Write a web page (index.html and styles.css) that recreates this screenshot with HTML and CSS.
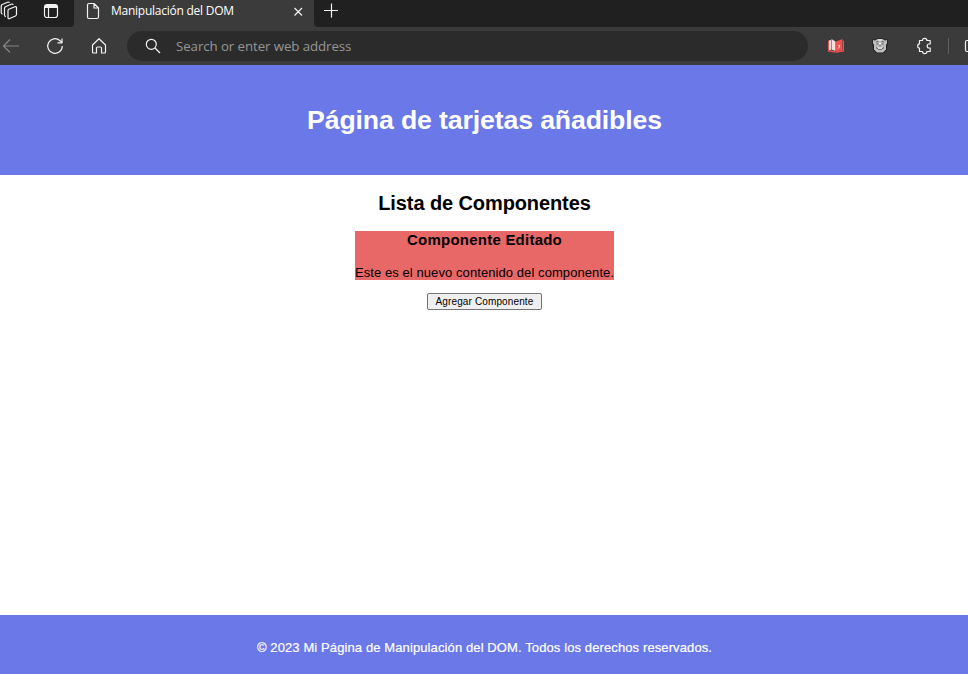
FILE: index.html
```html
<!DOCTYPE html>
<html lang="es">
<head>
<meta charset="utf-8">
<title>Manipulación del DOM</title>
<link rel="stylesheet" href="styles.css">
</head>
<body>
<div class="browser">
  <div class="tabs">
    <div class="tabs-left">
      <svg class="ico workspaces" width="18" height="20" viewBox="0 0 18 20"><path d="M8.700 8.200 15 5.700Q16.500 5.200 16.500 6.700V13.200Q16.500 14.400 15.400 15L9.700 17.500Q8 18.200 8 16.500V9.500Q8 8.500 8.700 8.200ZM6 15.500Q4.500 15.500 4.500 14V7.300Q4.500 6.200 5.500 5.700L11 3.200Q12.800 2.500 13.200 4M2.700 13Q1.200 13 1.200 11.500V5Q1.200 4 2.200 3.500L7.500 1.200Q9 .6 9.500 1.800"/></svg>
      <svg class="ico vertical" width="16" height="16" viewBox="0 0 16 16"><rect x="1.500" y="1.500" width="13" height="13" rx="2.500"/><path d="M2 3.500H14" stroke-width="3"/><path d="M5.500 4V14"/></svg>
    </div>
    <div class="tab">
      <svg class="ico page" width="14" height="18" viewBox="0 0 14 18"><path d="M3 1.500H8L12.500 6V15Q12.500 16.500 11 16.500H3Q1.500 16.500 1.500 15V3Q1.500 1.500 3 1.500ZM8 1.500V6H12.500"/></svg>
      <span class="tab-title">Manipulación del DOM</span>
      <svg class="ico close" width="10" height="10" viewBox="0 0 10 10"><path d="M1.500 1 9 8.500M9 1 1.500 8.500"/></svg>
    </div>
    <div class="tabs-right">
      <svg class="ico" width="16" height="16" viewBox="0 0 16 16"><path d="M1 8.500H15M8.500 1.500V15.500"/></svg>
    </div>
  </div>
  <div class="toolbar">
    <svg class="ico back" width="18" height="16" viewBox="0 0 18 16"><path d="M1.500 8H17M8 1.500 1.500 8 8 14.500"/></svg>
    <svg class="ico reload" width="18" height="18" viewBox="0 0 18 18"><path d="M16.300 9A7.300 7.300 0 1 1 13.800 3.500L16 5.500M16 1.500V5.800H11.500"/></svg>
    <svg class="ico home" width="16" height="18" viewBox="0 0 16 18"><path d="M1.500 8 8 1.700 14.500 8V15Q14.500 16 13.500 16H10.500V11Q10.500 10 9.500 10H6.500Q5.500 10 5.500 11V16H2.500Q1.500 16 1.500 15Z"/></svg>
    <div class="address">
      <svg class="ico" width="16" height="16" viewBox="0 0 16 16"><circle cx="6.300" cy="6.300" r="5"/><path d="M10 10 15 15"/></svg>
      <span>Search or enter web address</span>
    </div>
    <svg class="book" width="16" height="14" viewBox="0 0 16 14"><path fill="#ef5350" d="M0 2 1 1.500V11L8 12.500 15 11V1.500L16 2V12.500L8 13.700 0 12.500Z"/><path fill="#f5dedb" d="M1 1.500 3 1V11L1 11ZM3.500 0 7.500 2.500V12L3.500 10.500Z"/><path fill="#ef5350" d="M8 2.500 14.500 0V11L8 12.500Z"/><path d="M10 7 11.500 6V8L10 9.500" stroke="#ffc5c0" fill="none"/></svg>
    <svg class="monkey" width="16" height="16" viewBox="0 0 16 16"><path fill="#242424" d="M0 1.500H3L5 .3H11L13 1.500H16L15.500 7 15 12 11.500 15.500H4.500L1 12 .5 7Z"/><path fill="#bcbcbc" d="M1 2 3 2.500 5.500 1H10.500L13 2.500 15 2V5L14 7 14 11.500 11 14.500H5L2 11.500 2 7 1 5Z"/><path d="M4 4 6.500 3.500M9.500 3.500 12 4M4.500 6H6.500M9.500 6H11.500M7 8H9M4 9.500Q8 13.500 12 9.500" fill="none" stroke="#494949" stroke-width=".8"/><path d="M6.500 2H9.500M7 5.500H9M6 10H10" stroke="#fff"/></svg>
    <svg class="ico puzzle" width="16" height="18" viewBox="0 0 16 18"><path d="M2.500 3.500H5.500Q5.500 1.300 7.700 1.300T9.900 3.500H13.200V7H12Q10.200 7 10.200 9T12 11H13.200V14.500H9.900Q9.900 16.700 7.700 16.700T5.500 14.500H2.500V11.200Q.7 11.200 .7 9T2.500 6.800Z"/></svg>
    <span class="divider"></span>
    <svg class="ico split" width="4" height="14" viewBox="0 0 4 14"><path d="M4 1.500H3Q1.500 1.500 1.500 3V11Q1.500 12.500 3 12.500H4"/></svg>
  </div>
</div>
<header><h1>Página de tarjetas añadibles</h1></header>
<main>
  <h2>Lista de Componentes</h2>
  <section class="card">
    <h3>Componente Editado</h3>
    <p>Este es el nuevo contenido del componente.</p>
  </section>
  <button type="button">Agregar Componente</button>
</main>
<footer><p>© 2023 Mi Página de Manipulación del DOM. Todos los derechos reservados.</p></footer>
</body>
</html>
```
FILE: styles.css
```css
* { box-sizing: border-box; }
body {
  margin: 0;
  height: 674px;
  overflow: hidden;
  display: flex;
  flex-direction: column;
  background: #fff;
  font-family: "Liberation Sans", Arial, sans-serif;
}
h1, h2, h3, p { margin: 0; white-space: nowrap; }
svg { display: block; flex: none; }
.ico { fill: none; stroke: #f2f2f2; stroke-width: 1.2; stroke-linejoin: round; }
.browser { height: 65px; flex: none; background: #3b3b3b; font-family: "Open Sans", sans-serif; }
.tabs { height: 27px; display: flex; }
.tabs-left, .tabs-right { background: #202020; display: flex; }
.tabs-left { width: 74px; border-radius: 0 0 4px 0; }
.workspaces { margin-top: 1px; }
.vertical { margin: 3px 0 0 25px; }
.tab { width: 240px; display: flex; padding-left: 12px; }
.page { margin-top: 2px; }
.tab-title { width: 182px; margin: 2px 0 0 11px; color: #fff; font-size: 12px; line-height: 18px; letter-spacing: -0.25px; white-space: nowrap; }
.close { margin-top: 7px; }
.tabs-right { flex: 1; border-radius: 0 0 0 4px; padding: 2px 0 0 9px; }
.toolbar { height: 38px; display: flex; align-items: center; }
.back { margin-left: 2px; stroke: #858585; }
.reload { margin-left: 26px; }
.home { margin-left: 27px; }
.address {
  width: 681px;
  height: 30px;
  margin-left: 20px;
  padding-left: 18px;
  border-radius: 15px;
  background: #2b2b2b;
  display: flex;
  align-items: center;
  gap: 15px;
  color: #969696;
  font-size: 13.3px;
  letter-spacing: -0.09px;
}
.book { margin-left: 20px; }
.monkey { margin-left: 28px; }
.puzzle { margin-left: 29px; }
.divider { width: 1px; height: 16px; margin-left: 15px; background: #606060; }
.split { margin-left: 15px; }
header { height: 110px; flex: none; display: flex; align-items: center; justify-content: center; background: #6a78e8; color: #fff; }
h1 { font-size: 26.67px; line-height: 30px; letter-spacing: -0.13px; padding-left: 1px; }
main { flex: 1; display: flex; flex-direction: column; align-items: center; padding-top: 16px; }
h2 { font-size: 20px; line-height: 24px; letter-spacing: -0.1px; padding-left: 1px; }
.card { width: 259px; height: 49px; margin-top: 16px; background: #e86868; }
.card h3, .card p { display: flex; justify-content: center; }
h3 { font-size: 15px; line-height: 18px; letter-spacing: 0.23px; padding-left: 1px; }
.card p { margin-top: 16px; font-size: 13px; line-height: 15px; letter-spacing: 0.08px; padding-left: 1px; }
button { width: 115px; height: 17px; margin-top: 13px; padding: 0 0 0 1px; border: 1px solid #767676; border-radius: 2px; background: #efefef; color: #000; font: 10px/13px "Liberation Sans", Arial, sans-serif; letter-spacing: 0.13px; white-space: nowrap; }
footer { height: 59px; flex: none; display: flex; align-items: center; justify-content: center; padding: 5px 0 0 1px; background: #6a78e8; color: #fff; font-size: 13px; letter-spacing: 0.11px; -webkit-text-stroke: 0.2px #fff; }
```
